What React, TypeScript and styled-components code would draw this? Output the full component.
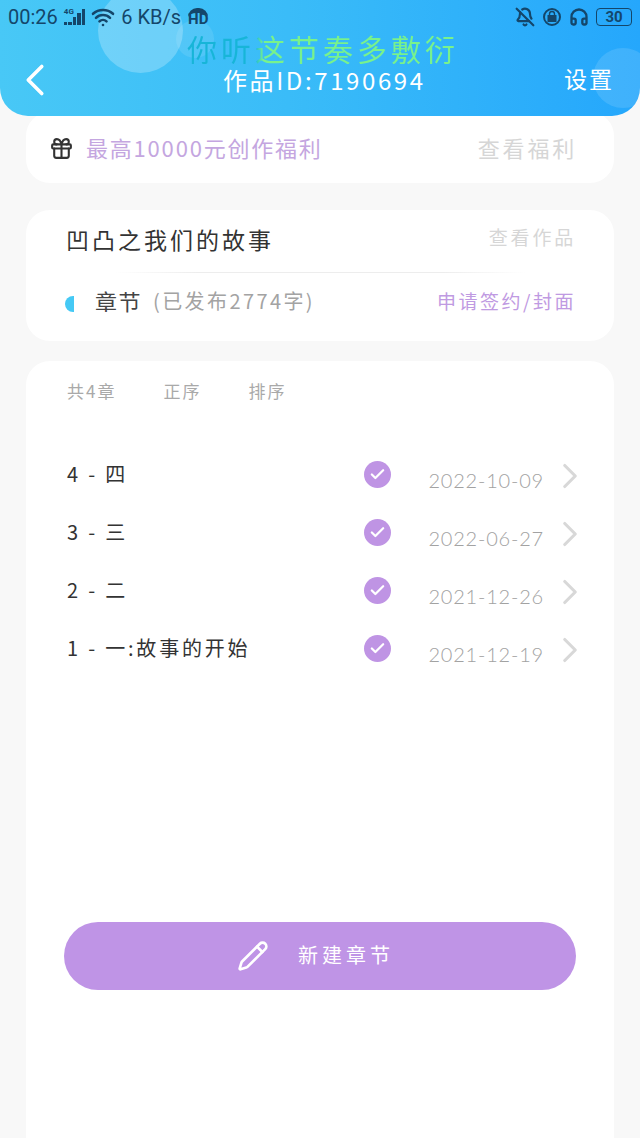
import React from 'react';
import styled, { createGlobalStyle } from 'styled-components';
import { Gift, Pencil, ChevronRight, ChevronLeft, BellOff, Headphones, Wifi, Check } from 'lucide-react';

const chapters = [
  { title: '4 - 四', date: '2022-10-09' },
  { title: '3 - 三', date: '2022-06-27' },
  { title: '2 - 二', date: '2021-12-26' },
  { title: '1 - 一:故事的开始', date: '2021-12-19' },
];

const cjk = `"Noto Sans CJK SC", "Noto Sans", sans-serif`;

const Global = createGlobalStyle`
  html, body { margin: 0; padding: 0; background: #f8f8f8; }
  body { font-family: ${cjk}; width: 640px; height: 1138px; overflow: hidden; }
  * { box-sizing: border-box; }
`;

const Page = styled.div`
  width: 640px;
  height: 1138px;
  display: flex;
  flex-direction: column;
  overflow: hidden;
`;

const Header = styled.header`
  position: relative;
  z-index: 2;
  flex: none;
  height: 116px;
  padding: 0 8px;
  overflow: hidden;
  border-radius: 0 0 28px 28px;
  background: linear-gradient(90deg, #48c8f6 0%, #3abcf8 45%, #25a7fc 100%);
`;

const Bubble = styled.div<{ $x: number; $y: number; $size: number; $alpha: number }>`
  position: absolute;
  left: ${p => p.$x}px;
  top: ${p => p.$y}px;
  width: ${p => p.$size}px;
  height: ${p => p.$size}px;
  border-radius: 50%;
  background: rgba(255, 255, 255, ${p => p.$alpha});
`;

const StatusBar = styled.div`
  position: relative;
  height: 33px;
  display: flex;
  align-items: center;
  justify-content: space-between;
  color: #14466a;
  font-family: Roboto, sans-serif;
  font-size: 20px;
`;

const StatusGroup = styled.div<{ $gap: number }>`
  display: flex;
  align-items: center;
  gap: ${p => p.$gap}px;
`;

const Signal = styled.div`
  position: relative;
  display: flex;
  align-items: flex-end;
  gap: 1px;
  height: 16px;
`;

const NetLabel = styled.span`
  position: absolute;
  left: 0;
  top: -2px;
  font-size: 8px;
  font-weight: 700;
  line-height: 9px;
`;

const SignalBar = styled.span<{ $h: number }>`
  width: 3.5px;
  height: ${p => p.$h}px;
  background: #14466a;
`;

const Hd = styled.span`
  margin-left: 1px;
  font-size: 15px;
  font-weight: 700;
  line-height: 13px;
  border-top: 5px solid #14466a;
  border-radius: 9px 9px 0 0;
`;

const Battery = styled.span`
  width: 36px;
  height: 18px;
  border: 1px solid #14466a;
  border-radius: 4px;
  font-size: 15px;
  font-weight: 700;
  line-height: 16px;
  text-align: center;
`;

const Marquee = styled.div`
  position: relative;
  margin-top: -1px;
  height: 32px;
  padding-left: 179px;
  font-size: 30px;
  line-height: 32px;
  letter-spacing: 4px;
  white-space: nowrap;
`;

const MarqueeText = styled.span`
  display: inline-block;
  background: linear-gradient(90deg, #17b5d8 0 25%, #78f28c 28% 100%);
  background-clip: text;
  -webkit-background-clip: text;
  color: transparent;
`;

const NavRow = styled.div`
  position: relative;
  display: flex;
  align-items: center;
  height: 32px;
  color: #fff;
`;

const BackIcon = styled(ChevronLeft)`
  flex: none;
  margin: -11px 0;
`;

const NavTitle = styled.div`
  margin-left: 161px;
  margin-right: auto;
  font-size: 24px;
  letter-spacing: 2.6px;
  line-height: 32px;
`;

const NavAction = styled.div`
  font-size: 23px;
  letter-spacing: 2px;
  margin: 0 18px 4px 0;
`;

const Body = styled.main`
  flex: 1;
  min-height: 0;
  margin-top: -4px;
  padding: 0 26px;
  display: flex;
  flex-direction: column;
`;

const Card = styled.section`
  background: #fff;
  border-radius: 24px;
`;

const GiftCard = styled(Card)`
  height: 71px;
  padding: 2px 37px 0 23px;
  display: flex;
  align-items: center;
  margin-bottom: 27px;
`;

const Benefit = styled.span`
  margin: 0 0 4px 12px;
  flex: 1;
  color: #c4a6e0;
  font-size: 22px;
  letter-spacing: 1.8px;
`;

const FaintLink = styled.span<{ $size: number }>`
  color: #d6d6d6;
  font-size: ${p => p.$size}px;
  letter-spacing: 2.8px;
  margin-bottom: 4px;
`;

const WorkCard = styled(Card)`
  height: 131px;
  padding: 0 38px 0 39px;
  margin-bottom: 20px;
`;

const WorkRow = styled.div`
  height: 62px;
  padding: 0 0 5px 1px;
  display: flex;
  align-items: center;
  justify-content: space-between;
`;

const WorkName = styled.span`
  color: #333;
  font-size: 23px;
  letter-spacing: 3px;
`;

const Divider = styled.div`
  height: 1px;
  margin: 0 50px;
  background: linear-gradient(90deg, transparent, #ededed 20%, #ededed 80%, transparent);
`;

const SectionRow = styled.div`
  height: 60px;
  padding-bottom: 6px;
  display: flex;
  align-items: center;
`;

const HalfDot = styled.span`
  width: 9px;
  height: 16px;
  margin-top: 7px;
  border-radius: 9px 0 0 9px;
  background: #45c9f5;
`;

const SectionName = styled.span`
  margin-left: 21px;
  color: #444;
  font-size: 22px;
  letter-spacing: 1.5px;
`;

const SectionInfo = styled.span`
  margin-left: 11px;
  flex: 1;
  color: #a3a3a3;
  font-size: 20px;
  letter-spacing: 2.4px;
`;

const PurpleLink = styled.span`
  color: #bf9ae2;
  font-size: 19px;
  letter-spacing: 2.5px;
`;

const ListCard = styled(Card)`
  flex: 1;
  padding: 0 35px 0 41px;
  border-radius: 24px 24px 0 0;
`;

const Toolbar = styled.div`
  height: 58px;
  display: flex;
  align-items: center;
  gap: 47px;
  color: #a9a9a9;
  font-size: 17px;
  letter-spacing: 2px;
  margin-bottom: 27px;
`;

const ChapterRow = styled.div`
  height: 58px;
  display: flex;
  align-items: center;
`;

const ChapterTitle = styled.span`
  flex: 1;
  margin-bottom: 4px;
  color: #333;
  font-size: 20px;
  letter-spacing: 2.8px;
`;

const CheckDot = styled.span`
  flex: none;
  width: 27px;
  height: 27px;
  margin-bottom: 2px;
  border-radius: 50%;
  background: #bf94e4;
  color: #fff;
  display: flex;
  align-items: center;
  justify-content: center;
`;

const ChapterDate = styled.span`
  margin: 10px 0 0 37px;
  color: #a2a2a2;
  font-family: Lato, sans-serif;
  font-weight: 300;
  font-size: 20px;
  letter-spacing: 0.8px;
`;

const ChapterArrow = styled.span`
  flex: none;
  margin: 2px -1px 0 16px;
  width: 20px;
  display: flex;
  justify-content: center;
  color: #d8d8d8;
`;

const ArrowIcon = styled(ChevronRight)`
  flex: none;
`;

const NewButton = styled.button`
  width: 512px;
  height: 68px;
  margin: 244px 0 0 -3px;
  padding: 0 9px 0 0;
  border: 0;
  border-radius: 34px;
  background: #bf94e6;
  color: #fff;
  display: flex;
  align-items: center;
  justify-content: center;
  gap: 29px;
  font-family: ${cjk};
  font-size: 20px;
  letter-spacing: 4px;
`;

const ButtonLabel = styled.span`
  margin-bottom: 4px;
`;

export default function App() {
  return (
    <Page>
      <Global />
      <Header>
        <Bubble $x={98} $y={-12} $size={85} $alpha={0.24} />
        <Bubble $x={176} $y={20} $size={38} $alpha={0.1} />
        <Bubble $x={593} $y={48} $size={60} $alpha={0.12} />
        <StatusBar>
          <StatusGroup $gap={6}>
            <span>00:26</span>
            <Signal>
              <NetLabel>4G</NetLabel>
              <SignalBar $h={3} />
              <SignalBar $h={3} />
              <SignalBar $h={8} />
              <SignalBar $h={12} />
              <SignalBar $h={16} />
            </Signal>
            <Wifi size={24} strokeWidth={2.6} />
            <span>6 KB/s</span>
            <Hd>HD</Hd>
          </StatusGroup>
          <StatusGroup $gap={7}>
            <BellOff size={20} strokeWidth={2.6} />
            <svg width="20" height="20" viewBox="0 0 20 20" fill="none" stroke="#14466a" strokeWidth="2">
              <circle cx="10" cy="10" r="8" />
              <rect x="6.5" y="9" width="7" height="5" fill="#14466a" />
              <path d="M7.5 9V7a2.5 2.5 0 0 1 5 0v2" strokeWidth="1.4" />
            </svg>
            <Headphones size={20} strokeWidth={2.8} />
            <Battery>30</Battery>
          </StatusGroup>
        </StatusBar>
        <Marquee><MarqueeText>你听这节奏多敷衍</MarqueeText></Marquee>
        <NavRow>
          <BackIcon size={54} strokeWidth={1.6} />
          <NavTitle>作品ID:7190694</NavTitle>
          <NavAction>设置</NavAction>
        </NavRow>
      </Header>
      <Body>
        <GiftCard>
          <Gift size={25} color="#333" strokeWidth={2} />
          <Benefit>最高10000元创作福利</Benefit>
          <FaintLink $size={22}>查看福利</FaintLink>
        </GiftCard>
        <WorkCard>
          <WorkRow>
            <WorkName>凹凸之我们的故事</WorkName>
            <FaintLink $size={19}>查看作品</FaintLink>
          </WorkRow>
          <Divider />
          <SectionRow>
            <HalfDot />
            <SectionName>章节</SectionName>
            <SectionInfo>(已发布2774字)</SectionInfo>
            <PurpleLink>申请签约/封面</PurpleLink>
          </SectionRow>
        </WorkCard>
        <ListCard>
          <Toolbar>
            <span>共4章</span>
            <span>正序</span>
            <span>排序</span>
          </Toolbar>
          {chapters.map(item => (
            <ChapterRow key={item.date}>
              <ChapterTitle>{item.title}</ChapterTitle>
              <CheckDot><Check size={17} strokeWidth={3.2} /></CheckDot>
              <ChapterDate>{item.date}</ChapterDate>
              <ChapterArrow><ArrowIcon size={42} strokeWidth={1.8} /></ChapterArrow>
            </ChapterRow>
          ))}
          <NewButton>
            <Pencil size={32} strokeWidth={2} />
            <ButtonLabel>新建章节</ButtonLabel>
          </NewButton>
        </ListCard>
      </Body>
    </Page>
  );
}
